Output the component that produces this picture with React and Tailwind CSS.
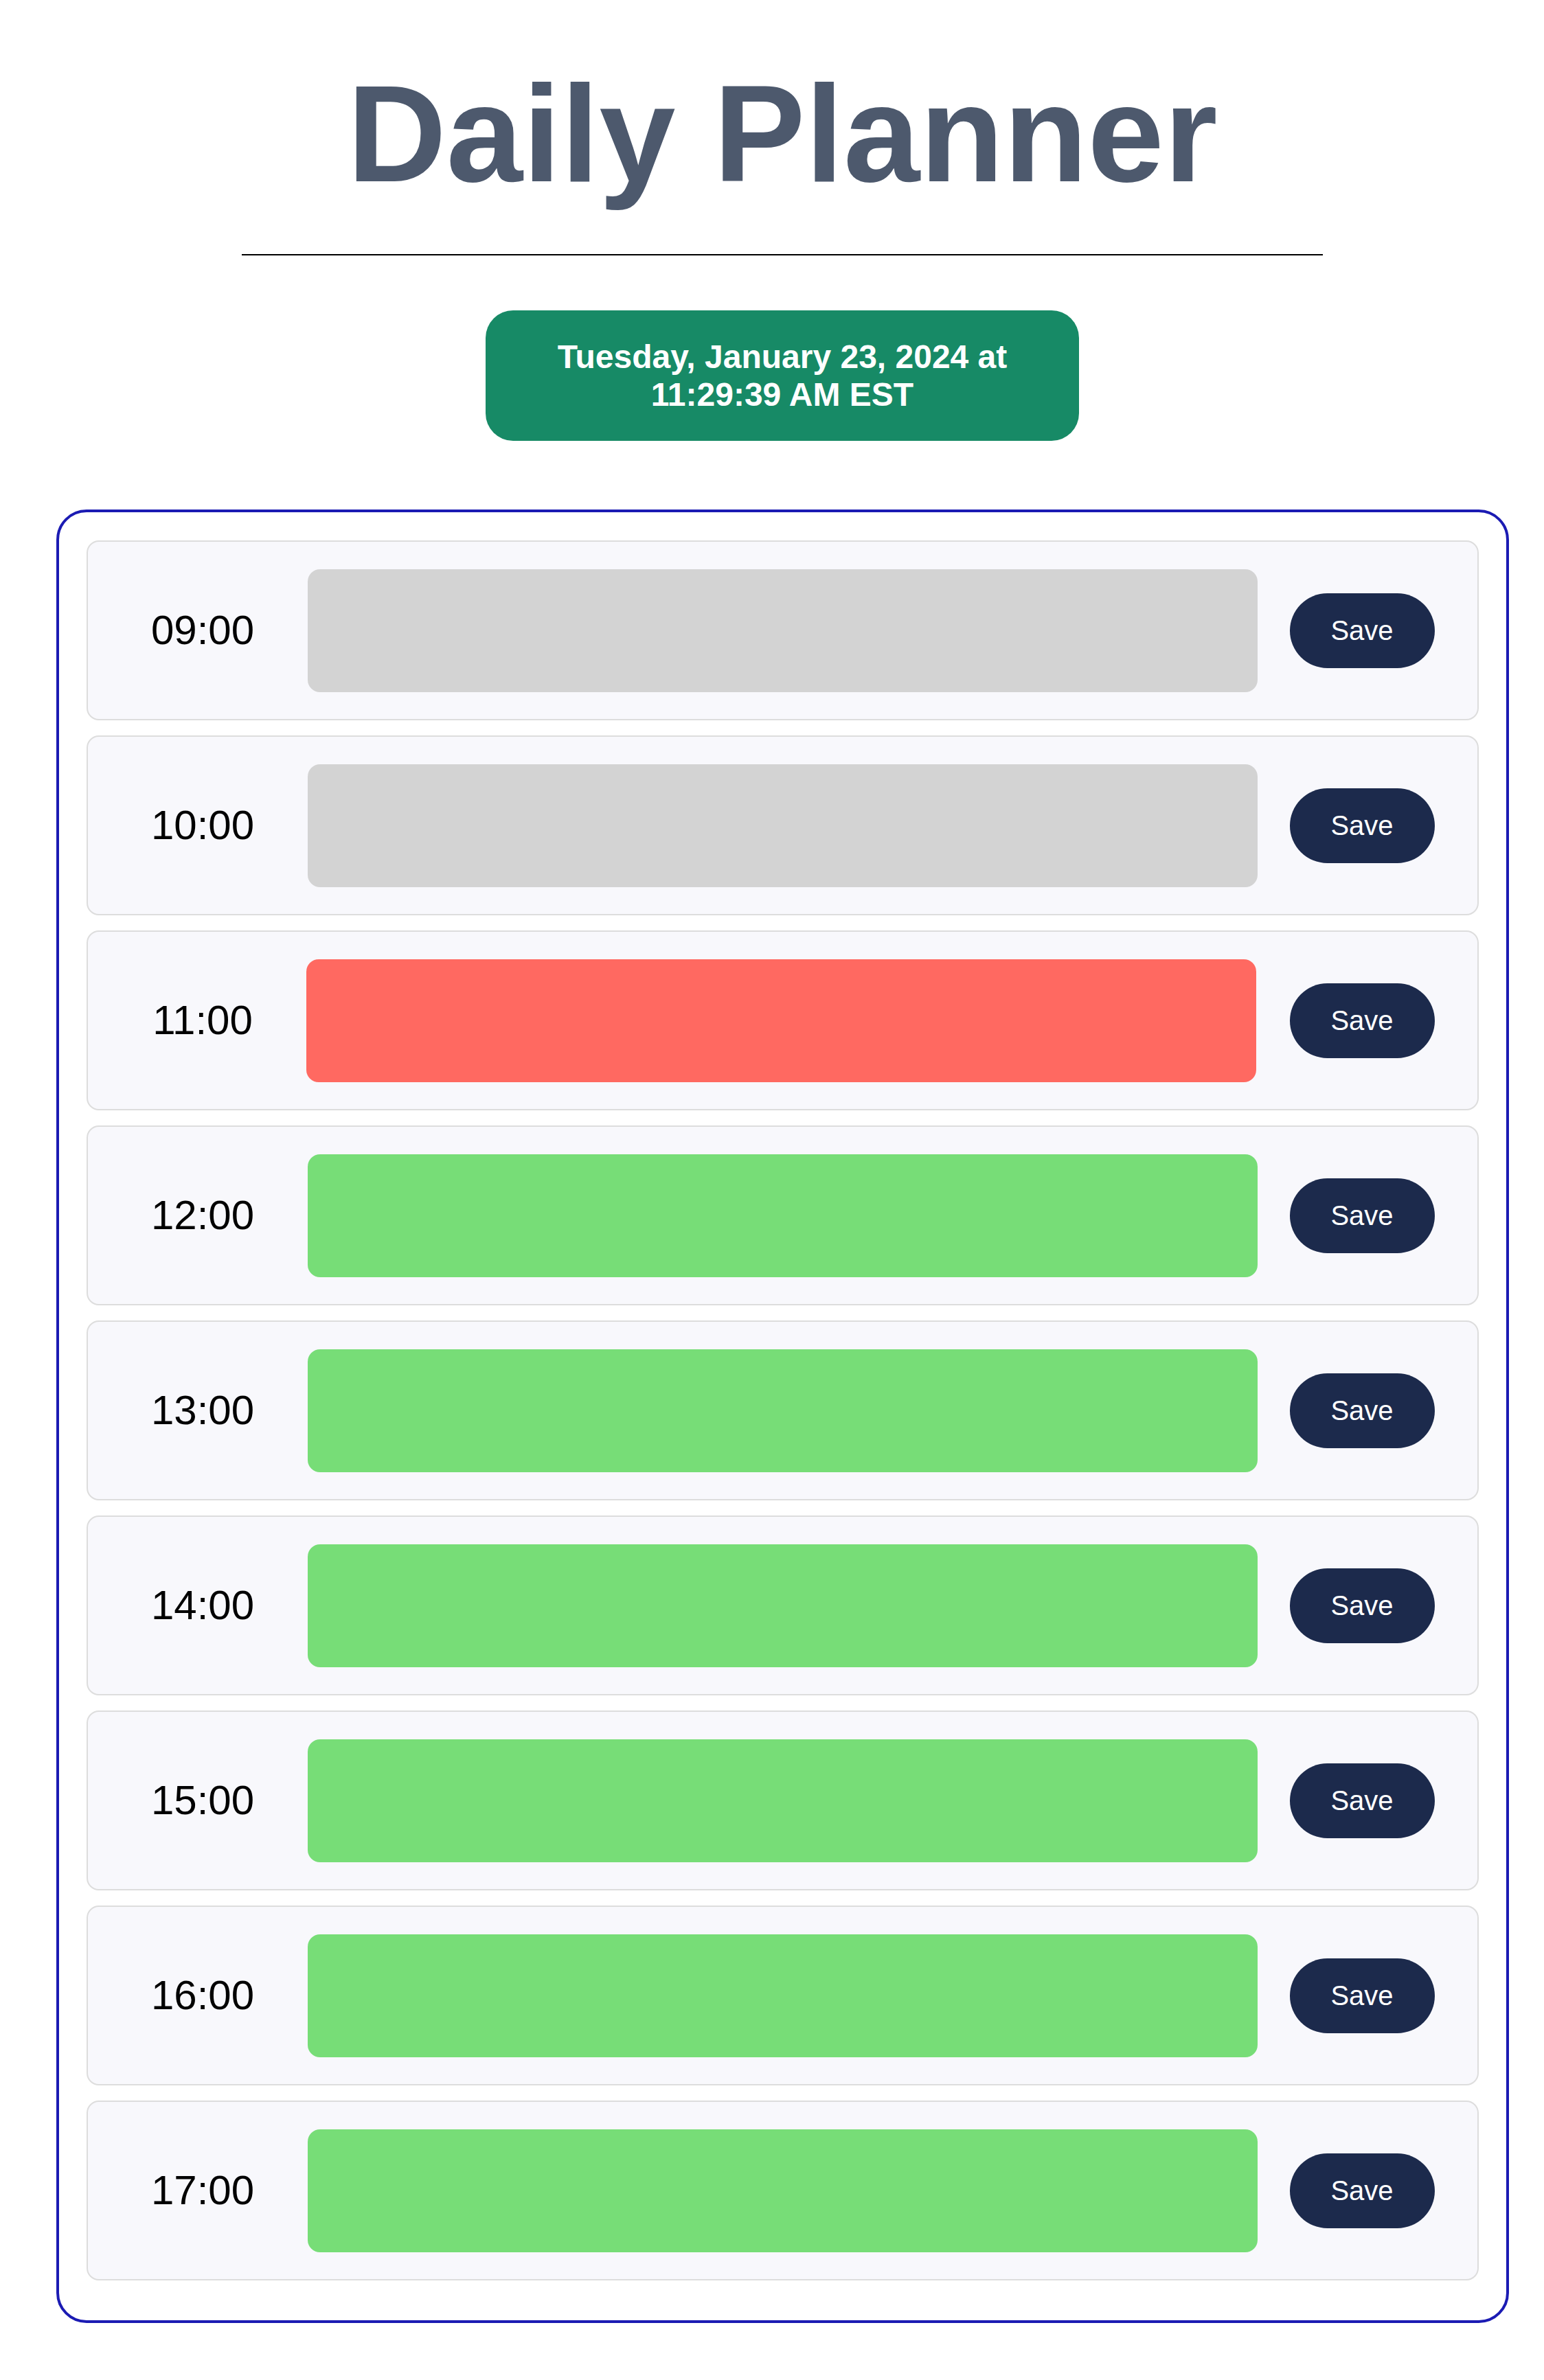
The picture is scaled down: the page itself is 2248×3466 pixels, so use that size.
import React from "react";

const hours = [
  { label: "09:00", state: "past" },
  { label: "10:00", state: "past" },
  { label: "11:00", state: "present" },
  { label: "12:00", state: "future" },
  { label: "13:00", state: "future" },
  { label: "14:00", state: "future" },
  { label: "15:00", state: "future" },
  { label: "16:00", state: "future" },
  { label: "17:00", state: "future" },
];

function HourRow({ hour }) {
  // past = grey, present = red, future = green
  let blockColor = "bg-[#d3d3d3]";
  if (hour.state === "present") blockColor = "bg-[#ff6961] -translate-x-[2px]";
  if (hour.state === "future") blockColor = "bg-[#77dd77]";

  return (
    <div className="flex items-center h-[262px] bg-[#f8f8fc] border-2 border-[#dddddd] rounded-[18px]">
      {/* Hour label */}
      <div className="w-[320px] shrink-0 pl-[15px] text-center text-[60px] leading-none text-black">
        {hour.label}
      </div>

      {/* Event text */}
      <textarea
        className={`flex-1 h-[179px] rounded-[18px] border-0 resize-none outline-none p-4 text-[40px] ${blockColor}`}
        defaultValue=""
      />

      {/* Save button */}
      <div className="w-[320px] shrink-0 pl-[47px] flex items-center">
        <button className="w-[211px] h-[109px] rounded-full bg-[#1c2a4c] text-white text-[40px] leading-none">
          Save
        </button>
      </div>
    </div>
  );
}

export default function App() {
  return (
    <div className="min-h-screen bg-white pl-[30px] pb-[83px] font-['Liberation_Sans',Arial,sans-serif]">
      {/* Header */}
      <h1 className="pt-[95px] text-center text-[200px] leading-none font-bold text-[#4d596d]">
        Daily Planner
      </h1>
      <div className="mx-auto mt-[75px] w-[1574px] h-[2px] bg-black" />

      {/* Current date */}
      <div className="mx-auto mt-[80px] w-[864px] px-[40px] py-[40px] rounded-[40px] bg-[#178a66] text-center text-white font-bold text-[48px] leading-[55px]">
        Tuesday, January 23, 2024 at 11:29:39 AM EST
      </div>

      {/* Time blocks */}
      <div className="mx-auto mt-[100px] w-[2115px] border-4 border-[#1b1bb3] rounded-[44px] pt-[41px] pb-[58px] px-[40px] flex flex-col gap-[22px]">
        {hours.map((hour) => (
          <HourRow key={hour.label} hour={hour} />
        ))}
      </div>
    </div>
  );
}
